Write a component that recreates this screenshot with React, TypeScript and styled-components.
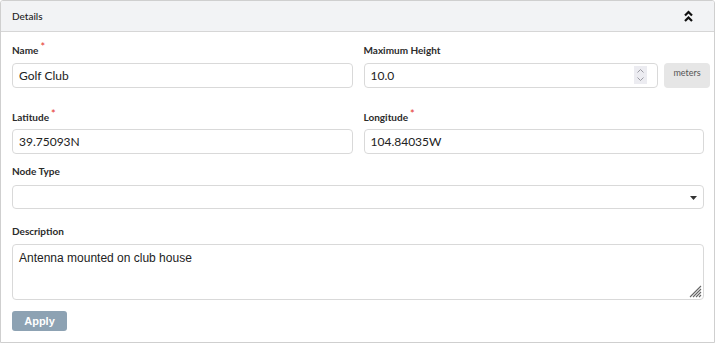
import React from "react";
import styled, { createGlobalStyle } from "styled-components";

const GlobalStyle = createGlobalStyle`
  html, body { margin: 0; padding: 0; background: #ffffff; }
  body { font-family: Lato, "Noto Sans", sans-serif; color: #333; }
  * { box-sizing: border-box; }
`;

const Panel = styled.section`
  width: 715px;
  height: 343px;
  border: 1px solid #cfcfcf;
  border-radius: 3px 3px 0 0;
  overflow: hidden;
  background: #fff;
`;

const Header = styled.header`
  height: 31px;
  background: #f2f3f5;
  border-bottom: 1px solid #d6d6d6;
  display: flex;
  align-items: center;
  justify-content: space-between;
  padding: 0 21px 0 11px;
  font-size: 10px;
  color: #222;
`;

const Title = styled.span`
  font-weight: 500;
`;

const CollapseButton = styled.button`
  border: 0;
  background: transparent;
  padding: 0;
  width: 9px;
  height: 12px;
  display: flex;
  cursor: pointer;
`;

const Body = styled.div`
  padding: 11px 10px 0 11px;
  display: flex;
  flex-direction: column;
`;

const Row = styled.div<{ $mt?: number }>`
  display: grid;
  grid-template-columns: 1fr 1fr;
  column-gap: 11px;
  margin-top: ${(p) => p.$mt ?? 0}px;
`;

const Field = styled.div<{ $mt?: number }>`
  display: flex;
  flex-direction: column;
  margin-top: ${(p) => p.$mt ?? 0}px;
  min-width: 0;
`;

const Label = styled.label<{ $gap: number }>`
  font-size: 10px;
  line-height: 14px;
  height: 14px;
  font-weight: 700;
  color: #2b2b2b;
  margin-bottom: ${(p) => p.$gap}px;
`;

const Star = styled.span`
  color: #e5332f;
  font-weight: 400;
  position: relative;
  top: -3px;
  margin-left: 2px;
  font-size: 11px;
`;

const TextInput = styled.input`
  width: 100%;
  height: 25px;
  border: 1px solid #d9d9d9;
  border-radius: 4px;
  padding: 0 6px;
  font-family: Lato, sans-serif;
  font-size: 12px;
  color: #222;
  background: #fff;
  outline: none;
`;

const InputWithUnit = styled.div`
  display: flex;
  gap: 6px;
  margin-right: -6px;
`;

const SpinWrap = styled.div`
  position: relative;
  flex: 1;
`;

const Spinner = styled.div`
  position: absolute;
  right: 11px;
  top: 3px;
  width: 13px;
  height: 18px;
  background: #ececf1;
  display: flex;
  align-items: center;
  justify-content: center;
`;

const Unit = styled.div`
  width: 46px;
  height: 25px;
  background: #e6e6e6;
  border-radius: 4px;
  font-size: 9px;
  color: #555;
  text-align: center;
  padding-top: 4px;
`;

const SelectWrap = styled.div`
  position: relative;
`;

const Select = styled.select`
  width: 100%;
  height: 24px;
  border: 1px solid #d9d9d9;
  border-radius: 4px;
  appearance: none;
  background: #fff;
  font-family: Lato, sans-serif;
  font-size: 12px;
  padding: 0 6px;
  outline: none;
`;

const Caret = styled.svg`
  position: absolute;
  right: 7px;
  top: 11px;
  pointer-events: none;
`;

const AreaWrap = styled.div`
  position: relative;
`;

const TextArea = styled.textarea`
  display: block;
  width: 100%;
  height: 56px;
  border: 1px solid #d9d9d9;
  border-radius: 4px;
  padding: 6px 6px;
  font-family: "Liberation Sans", Arial, sans-serif;
  font-size: 12px;
  line-height: 14px;
  color: #222;
  resize: none;
  outline: none;
`;

const Grip = styled.svg`
  position: absolute;
  right: 2px;
  bottom: 2px;
  pointer-events: none;
`;

const ApplyButton = styled.button`
  margin-top: 11px;
  width: 55px;
  height: 20px;
  border: 0;
  border-radius: 3px;
  background: #8da2b3;
  color: #fff;
  font-family: "Liberation Sans", Arial, sans-serif;
  font-weight: 700;
  font-size: 11px;
  padding: 0;
  cursor: pointer;
`;

function Req() {
  return <Star>*</Star>;
}

export default function App() {
  return (
    <>
      <GlobalStyle />
      <Panel>
        <Header>
          <Title>Details</Title>
          <CollapseButton aria-label="collapse">
            <svg width="9" height="12" viewBox="0 0 9 12">
              <path d="M1 5.5 L4.5 2 L8 5.5 M1 11 L4.5 7.5 L8 11" fill="none" stroke="#111" strokeWidth="2.2" />
            </svg>
          </CollapseButton>
        </Header>
        <Body>
          <Row>
            <Field>
              <Label $gap={6}>
                Name<Req />
              </Label>
              <TextInput defaultValue="Golf Club" />
            </Field>
            <Field>
              <Label $gap={6}>Maximum Height</Label>
              <InputWithUnit>
                <SpinWrap>
                  <TextInput defaultValue="10.0" />
                  <Spinner>
                    <svg width="9" height="14" viewBox="0 0 9 14">
                      <path d="M1.5 4.5 L4.5 1.5 L7.5 4.5 M1.5 9.5 L4.5 12.5 L7.5 9.5" fill="none" stroke="#9a9aa2" strokeWidth="1" />
                    </svg>
                  </Spinner>
                </SpinWrap>
                <Unit>meters</Unit>
              </InputWithUnit>
            </Field>
          </Row>
          <Row $mt={22}>
            <Field>
              <Label $gap={5}>
                Latitude<Req />
              </Label>
              <TextInput defaultValue="39.75093N" />
            </Field>
            <Field>
              <Label $gap={5}>
                Longitude<Req />
              </Label>
              <TextInput defaultValue="104.84035W" />
            </Field>
          </Row>
          <Field $mt={10}>
            <Label $gap={7}>Node Type</Label>
            <SelectWrap>
              <Select defaultValue="">
                <option value=""></option>
              </Select>
              <Caret width="7" height="4" viewBox="0 0 7 4">
                <path d="M0 0 H7 L3.5 4 Z" fill="#333" />
              </Caret>
            </SelectWrap>
          </Field>
          <Field $mt={15}>
            <Label $gap={6}>Description</Label>
            <AreaWrap>
              <TextArea defaultValue="Antenna mounted on club house" />
              <Grip width="13" height="13" viewBox="0 0 13 13">
                <path d="M12 1 L1 12 M12 4 L4 12 M12 7 L7 12 M12 10 L10 12" stroke="#666" strokeWidth="1.1" />
              </Grip>
            </AreaWrap>
          </Field>
          <div>
            <ApplyButton>Apply</ApplyButton>
          </div>
        </Body>
      </Panel>
    </>
  );
}
